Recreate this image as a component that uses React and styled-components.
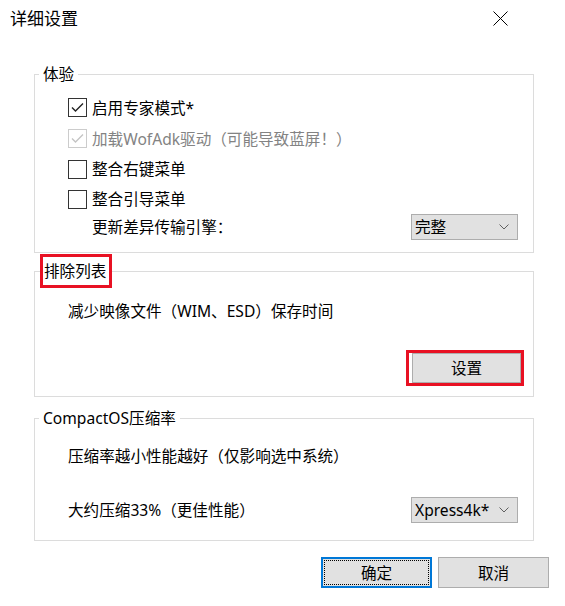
import React from 'react'
import styled, { createGlobalStyle, css } from 'styled-components'

const GlobalStyle = createGlobalStyle`
  html, body {
    margin: 0;
    padding: 0;
    background: #fff;
  }
  body {
    font-family: "Noto Sans", "Noto Sans CJK SC", sans-serif;
    text-spacing-trim: space-all;
  }
  * {
    box-sizing: border-box;
  }
`

const Window = styled.div`
  width: 565px;
  height: 606px;
  background: #fff;
  color: #000;
  font-size: 15.6px;
  line-height: 20px;
  display: flex;
  flex-direction: column;
  overflow: hidden;
`

const TitleBar = styled.div`
  height: 37px;
  display: flex;
  align-items: center;
  justify-content: space-between;
  padding-left: 10px;
`

const Title = styled.div`
  font-size: 17px;
  line-height: 20px;
`

const CloseButton = styled.div`
  width: 58px;
  height: 37px;
  margin-right: 36px;
  display: flex;
  align-items: center;
  justify-content: center;
`

const Body = styled.div`
  padding: 27px 31px 0 34px;
  display: flex;
  flex-direction: column;
`

const Group = styled.fieldset`
  margin: ${({ $gap }) => $gap || 0}px 0 0;
  padding: 0;
  border: 1px solid #dcdcdc;
  min-width: 0;
`

const Legend = styled.legend`
  margin-left: 4px;
  padding: 0 4px;
  font-size: 15.6px;
  line-height: 20px;

  ${({ $marked }) =>
    $marked &&
    css`
      margin-left: 5px;
      padding: 4px 3px 4px 1px;
      border: 3px solid #e81123;
    `};
`

const GroupBody = styled.div`
  display: flex;
  flex-direction: column;
  padding: ${({ $pad }) => $pad};
`

const CheckRow = styled.div`
  display: flex;
  align-items: center;
  gap: 5px;
  height: ${({ $h }) => $h || 30}px;
  color: ${({ $disabled }) => ($disabled ? '#838383' : '#000')};
  white-space: nowrap;
`

const Box = styled.span`
  width: 19px;
  height: 19px;
  flex: none;
  border: 1px solid ${({ $disabled }) => ($disabled ? '#cccccc' : '#333333')};
  background: #fff;
  display: flex;
  align-items: center;
  justify-content: center;
`

const SettingRow = styled.div`
  display: flex;
  align-items: center;
  justify-content: space-between;
  height: 26px;
  padding-left: ${({ $indent }) => $indent || 0}px;
  margin-top: ${({ $top }) => $top || 0}px;
`

const TextLine = styled.div`
  height: 20px;
  margin-top: ${({ $top }) => $top || 0}px;
  white-space: nowrap;
`

const Combo = styled.div`
  width: 107px;
  height: 26px;
  background: #e1e1e1;
  border: 1px solid #adadad;
  display: flex;
  align-items: center;
  justify-content: space-between;
  padding: 0 8px 0 3px;
`

const ButtonRow = styled.div`
  display: flex;
  justify-content: flex-end;
  margin-top: ${({ $top }) => $top || 0}px;
`

const Marked = styled.div`
  display: flex;
  border: 3px solid #e81123;
  padding-left: 3px;
`

const Button = styled.button`
  width: ${({ $w }) => $w || 111}px;
  height: ${({ $h }) => $h || 31}px;
  background: #e1e1e1;
  border: 1px solid #adadad;
  border-radius: 0;
  color: #000;
  font-family: inherit;
  font-size: 15.6px;
  line-height: 20px;
  padding: 0;

  ${({ $primary }) =>
    $primary &&
    css`
      border: 2px solid #0078d7;
      outline: 1px dotted #000;
      outline-offset: -4px;
    `};
`

const Footer = styled.div`
  display: flex;
  justify-content: flex-end;
  gap: 6px;
  margin-top: 16px;
  padding-right: 16px;
`

const Check = ({ disabled }) => (
  <svg width="13" height="11" viewBox="0 0 13 11">
    <polyline
      points="1,5.5 4.5,9 12,1.5"
      fill="none"
      stroke={disabled ? '#c4c4c4' : '#222'}
      strokeWidth="1.4"
    />
  </svg>
)

const Chevron = () => (
  <svg width="10" height="6" viewBox="0 0 10 6">
    <polyline points="0.5,0.5 5,5 9.5,0.5" fill="none" stroke="#606060" strokeWidth="1" />
  </svg>
)

const CheckOption = ({ checked, disabled, label, h }) => (
  <CheckRow $disabled={disabled} $h={h}>
    <Box $disabled={disabled}>{checked && <Check disabled={disabled} />}</Box>
    <span>{label}</span>
  </CheckRow>
)

export default function App() {
  return (
    <>
      <GlobalStyle />
      <Window>
        <TitleBar>
          <Title>详细设置</Title>
          <CloseButton>
            <svg width="15" height="15" viewBox="0 0 15 15">
              <path d="M0.5 0.5 L14.5 14.5 M14.5 0.5 L0.5 14.5" stroke="#000" strokeWidth="1" />
            </svg>
          </CloseButton>
        </TitleBar>

        <Body>
          <Group>
            <Legend>体验</Legend>
            <GroupBody $pad="8px 15px 12px 33px">
              <CheckOption checked label="启用专家模式*" h={31} />
              <CheckOption checked disabled label="加载WofAdk驱动（可能导致蓝屏！）" h={31} />
              <CheckOption label="整合右键菜单" />
              <CheckOption label="整合引导菜单" />
              <SettingRow $indent={24}>
                <span>更新差异传输引擎：</span>
                <Combo>
                  <span>完整</span>
                  <Chevron />
                </Combo>
              </SettingRow>
            </GroupBody>
          </Group>

          <Group $gap={1}>
            <Legend $marked>排除列表</Legend>
            <GroupBody $pad="13px 9px 10px 33px">
              <TextLine>减少映像文件（WIM、ESD）保存时间</TextLine>
              <ButtonRow $top={29}>
                <Marked>
                  <Button $w={109} $h={30}>设置</Button>
                </Marked>
              </ButtonRow>
            </GroupBody>
          </Group>

          <Group $gap={11}>
            <Legend>CompactOS压缩率</Legend>
            <GroupBody $pad="18px 15px 17px 33px">
              <TextLine>压缩率越小性能越好（仅影响选中系统）</TextLine>
              <SettingRow $top={31}>
                <span>大约压缩33%（更佳性能）</span>
                <Combo>
                  <span>Xpress4k*</span>
                  <Chevron />
                </Combo>
              </SettingRow>
            </GroupBody>
          </Group>
        </Body>

        <Footer>
          <Button $primary>确定</Button>
          <Button>取消</Button>
        </Footer>
      </Window>
    </>
  )
}
